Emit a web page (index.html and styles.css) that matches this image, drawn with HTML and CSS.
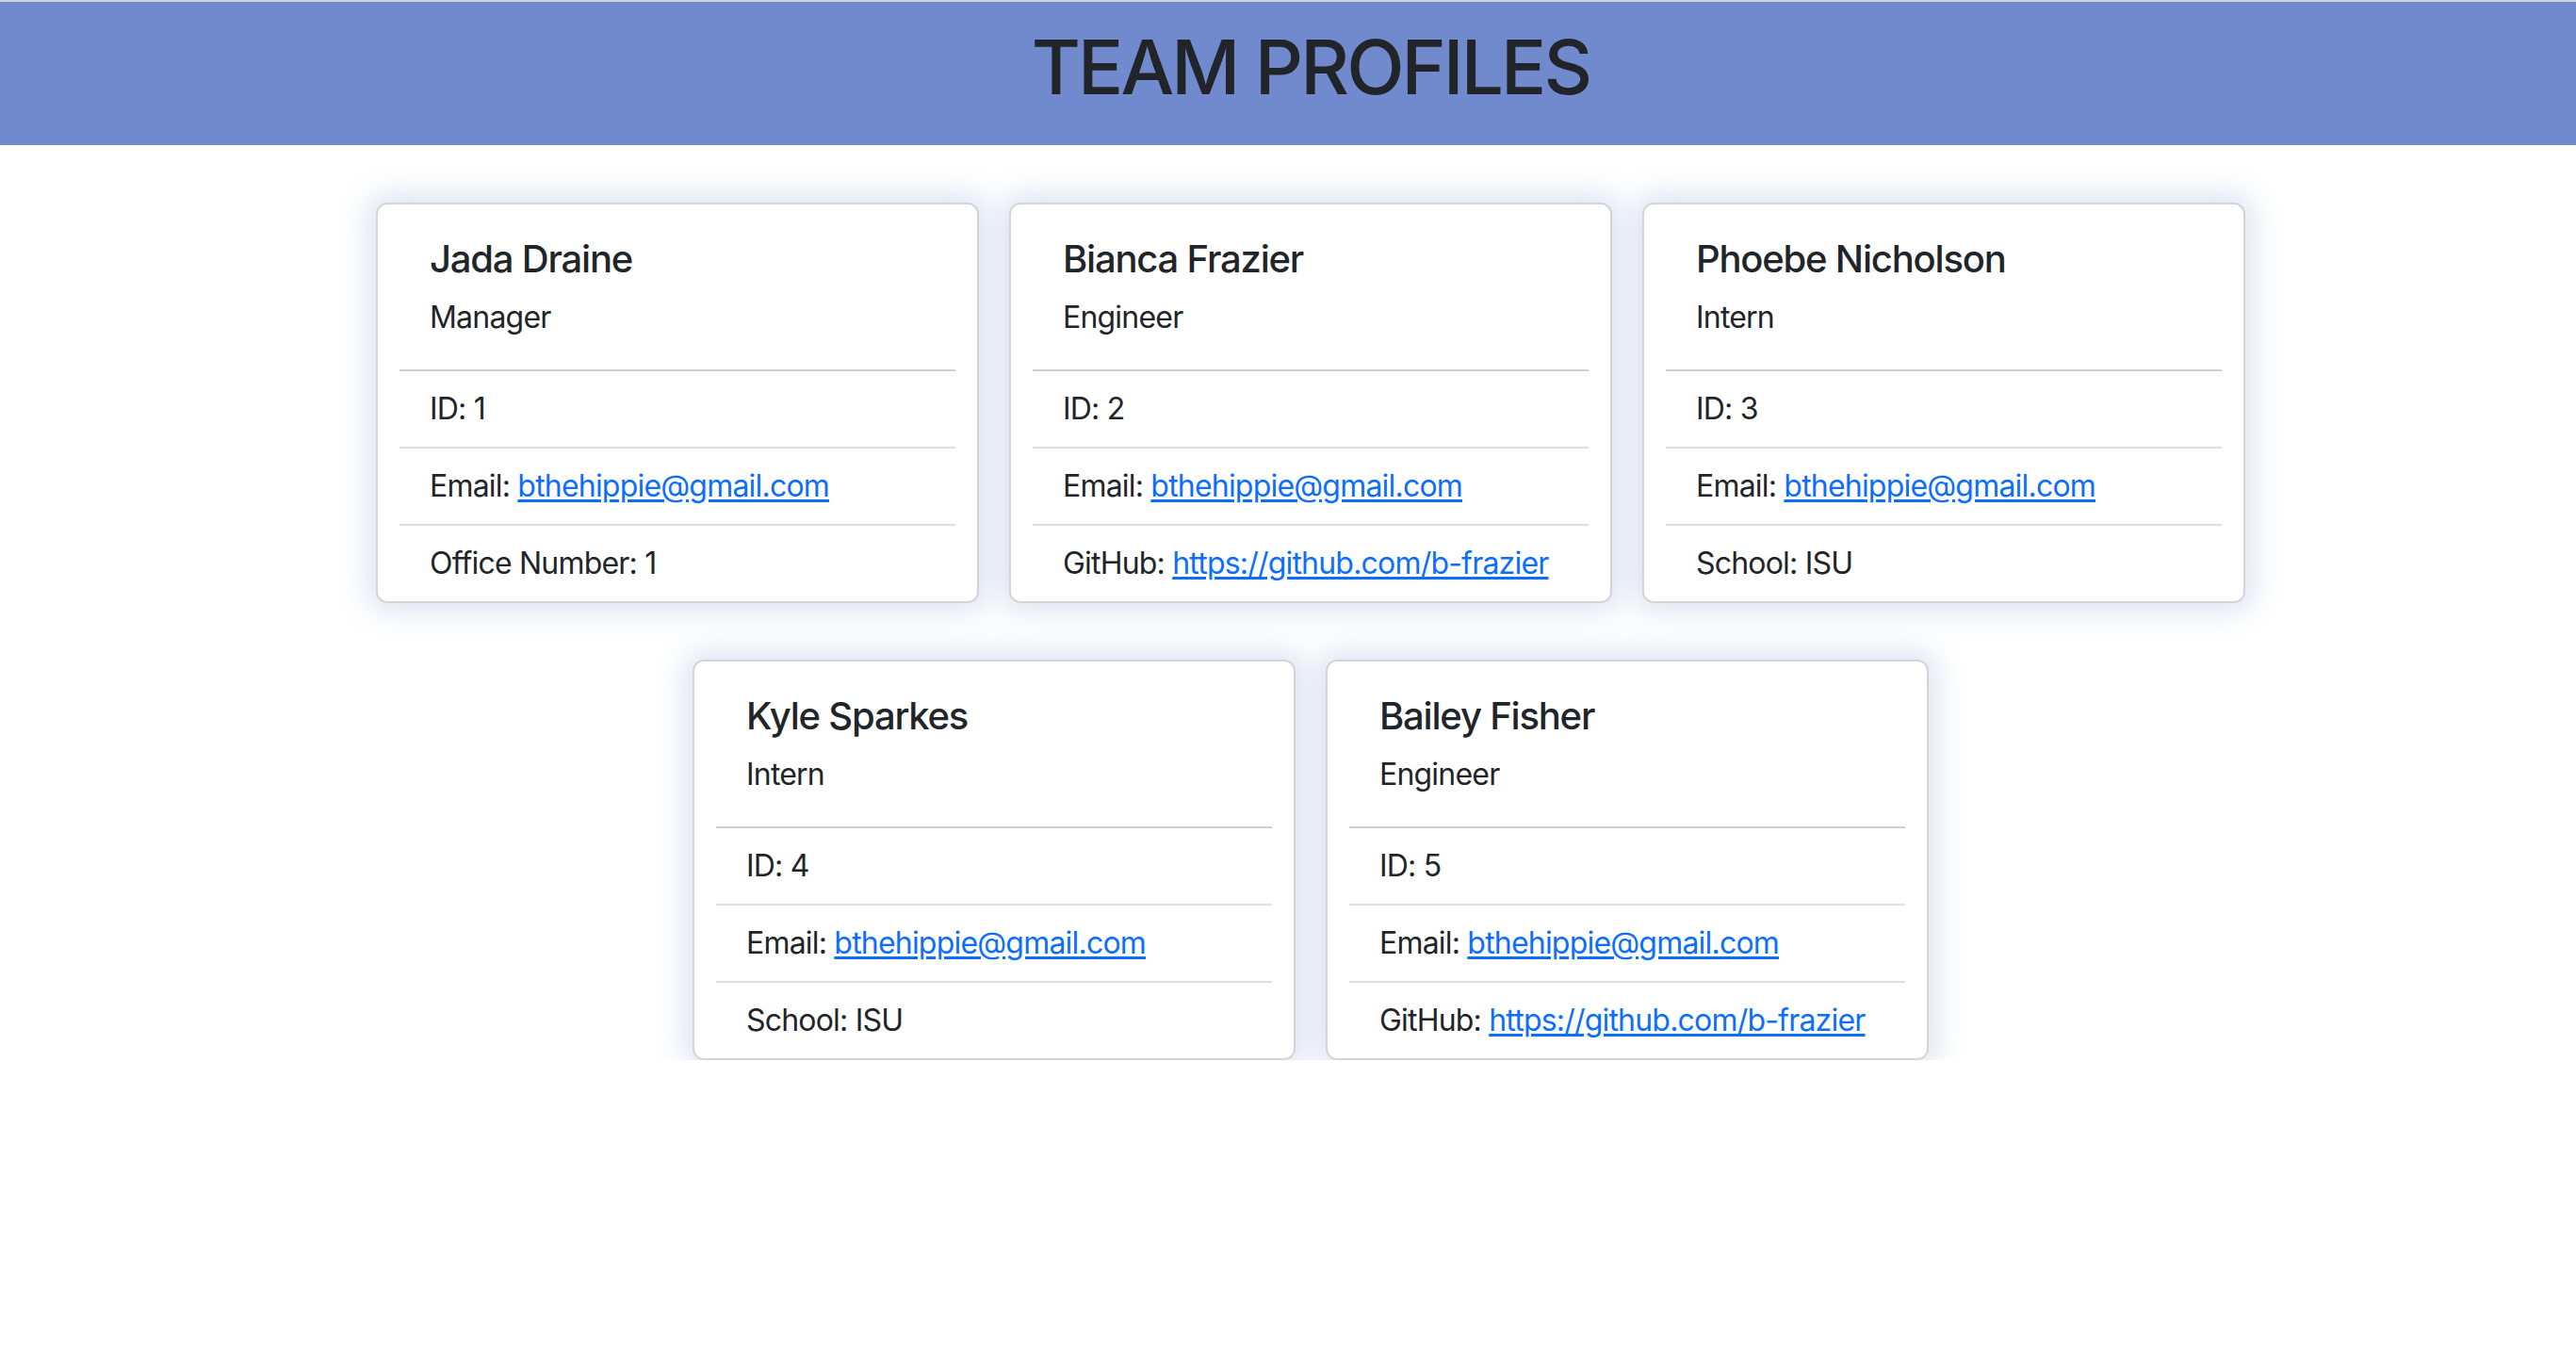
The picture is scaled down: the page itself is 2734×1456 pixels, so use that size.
FILE: index.html
```html
<!DOCTYPE html>
<html lang="en">
<head>
<meta charset="utf-8">
<title>Team Profiles</title>
<link rel="stylesheet" href="styles.css">
</head>
<body>
<header class="banner">
  <h1 class="banner-title">TEAM PROFILES</h1>
</header>
<main class="team">
  <div class="card">
    <div class="card-head">
      <h5 class="name">Jada Draine</h5>
      <p class="role">Manager</p>
    </div>
    <ul class="details">
      <li>ID: 1</li>
      <li>Email: <a href="#">bthehippie@gmail.com</a></li>
      <li>Office Number: 1</li>
    </ul>
  </div>
  <div class="card">
    <div class="card-head">
      <h5 class="name">Bianca Frazier</h5>
      <p class="role">Engineer</p>
    </div>
    <ul class="details">
      <li>ID: 2</li>
      <li>Email: <a href="#">bthehippie@gmail.com</a></li>
      <li>GitHub: <a href="#">https://github.com/b-frazier</a></li>
    </ul>
  </div>
  <div class="card">
    <div class="card-head">
      <h5 class="name">Phoebe Nicholson</h5>
      <p class="role">Intern</p>
    </div>
    <ul class="details">
      <li>ID: 3</li>
      <li>Email: <a href="#">bthehippie@gmail.com</a></li>
      <li>School: ISU</li>
    </ul>
  </div>
  <div class="card">
    <div class="card-head">
      <h5 class="name">Kyle Sparkes</h5>
      <p class="role">Intern</p>
    </div>
    <ul class="details">
      <li>ID: 4</li>
      <li>Email: <a href="#">bthehippie@gmail.com</a></li>
      <li>School: ISU</li>
    </ul>
  </div>
  <div class="card">
    <div class="card-head">
      <h5 class="name">Bailey Fisher</h5>
      <p class="role">Engineer</p>
    </div>
    <ul class="details">
      <li>ID: 5</li>
      <li>Email: <a href="#">bthehippie@gmail.com</a></li>
      <li>GitHub: <a href="#">https://github.com/b-frazier</a></li>
    </ul>
  </div>
</main>
</body>
</html>
```
FILE: styles.css
```css
* { box-sizing: border-box; }

html, body {
  margin: 0;
  padding: 0;
  background: #ffffff;
  color: #212529;
  font-family: Inter, "Noto Sans", "Liberation Sans", sans-serif;
  font-size: 32px;
  line-height: 1.5;
}

.banner {
  border-top: 2px solid #d2d4d8;
  background: #718acd;
  height: 154px;
  padding: 21px 0 0 48px;
  text-align: center;
}

.banner-title {
  margin: 0;
  font-size: 80px;
  font-weight: 500;
  line-height: 1.2;
  letter-spacing: -2.9px;
}

.team {
  display: flex;
  flex-wrap: wrap;
  justify-content: center;
  gap: 60px 32px;
  width: 1988px;
  margin: 61px auto 0;
  position: relative;
  left: 24px;
}

.card {
  width: 640px;
  background: #ffffff;
  border: 2px solid #d4d5d9;
  border-radius: 12px;
  padding: 0 23px;
  box-shadow: 0 0 30px 8px rgba(113, 138, 205, 0.25);
}

.card-head {
  padding: 34px 32px 31px;
  border-bottom: 2px solid #d0d0d0;
}

.name {
  margin: 0 0 14px;
  font-size: 40px;
  font-weight: 500;
  line-height: 1.2;
  letter-spacing: -1.2px;
}

.role {
  margin: 0;
  letter-spacing: -0.8px;
}

.details {
  list-style: none;
  margin: 0;
  padding: 0;
}

.details li {
  padding: 16px 32px;
  border-bottom: 2px solid #dfdfdf;
  letter-spacing: -0.8px;
  white-space: nowrap;
}

.details li:last-child {
  border-bottom: none;
}

.details a {
  color: #0d6efd;
  text-decoration: underline;
  text-underline-offset: 3px;
}
```
